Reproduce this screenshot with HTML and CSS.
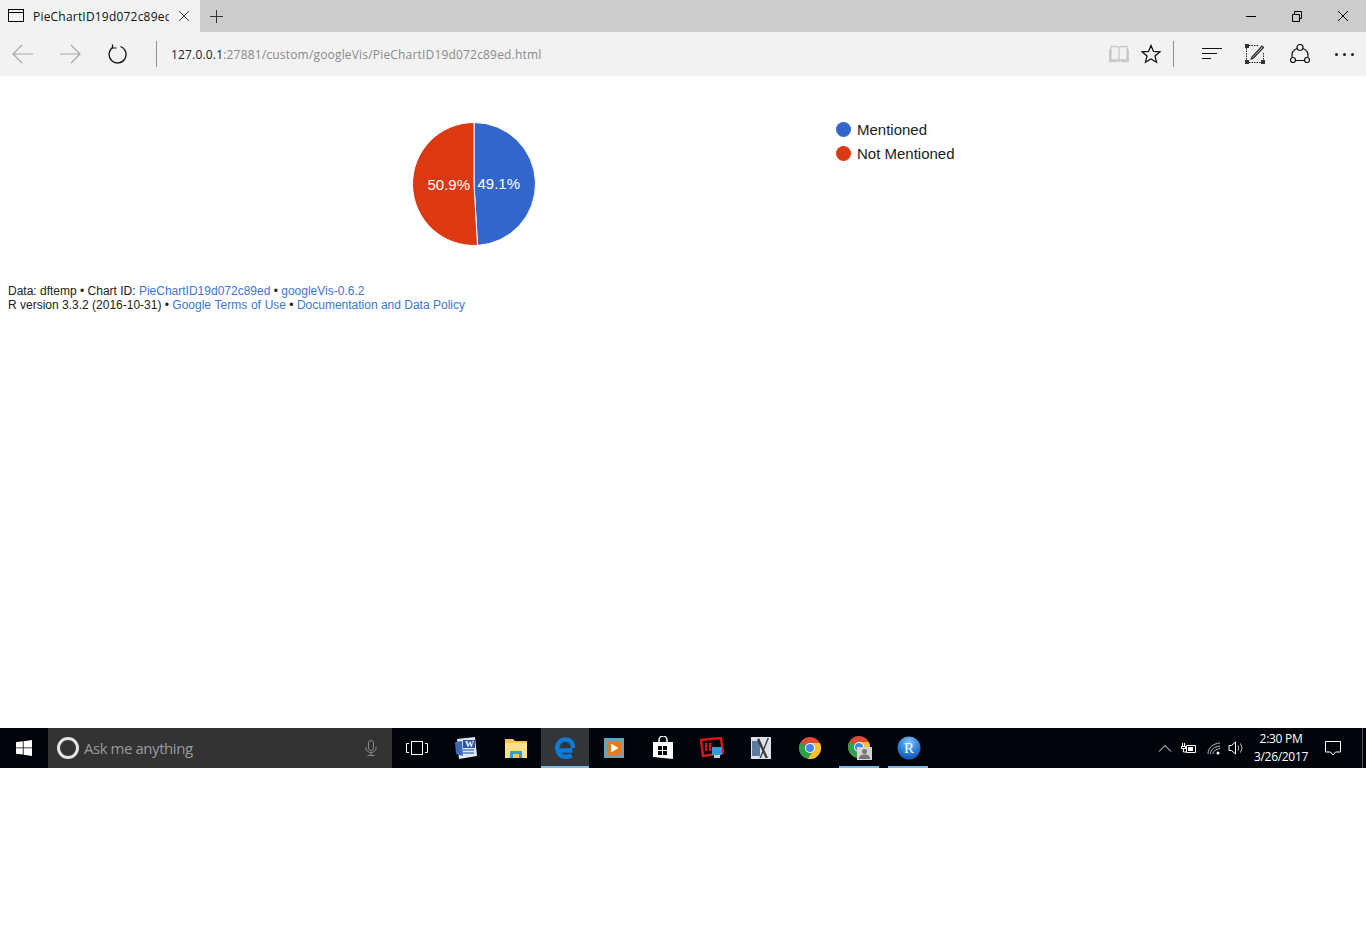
FILE: index.html
```html
<!DOCTYPE html>
<html lang="en">

<head>
    <meta charset="UTF-8">
    <meta name="viewport" content="width=device-width, initial-scale=1.0">
    <title>PieChartID19d072c89ed</title>
    <link rel="stylesheet" href="styles.css">
</head>

<body>
    <!-- Tab strip -->
    <div class="tabbar">
        <div class="tab">
            <svg class="tab-icon" width="16" height="14" viewBox="0 0 16 14" fill="none" stroke="#000">
                <rect x="0.5" y="0.5" width="15" height="12"/>
                <path d="M1 3.500h14"/>
            </svg>
            <span class="tab-title">PieChartID19d072c89ed</span>
            <svg class="tab-close" width="12" height="12" viewBox="0 0 12 12" stroke="#333" fill="none">
                <path d="M1 1l10 10M11 1L1 11"/>
            </svg>
        </div>
        <svg class="new-tab" width="15" height="15" viewBox="0 0 15 15" stroke="#333" fill="none">
            <path d="M7.500 1v13M1 7.500h13"/>
        </svg>
        <div class="window-btns">
            <svg width="46" height="32" viewBox="0 0 46 32" stroke="#000" fill="none"><path d="M18 16.500h10"/></svg>
            <svg width="46" height="32" viewBox="0 0 46 32" stroke="#000" fill="none"><path d="M18.500 14.500h7v7h-7zM20.500 14v-2.500h7v7H26"/></svg>
            <svg width="46" height="32" viewBox="0 0 46 32" stroke="#000" fill="none"><path d="M18 11l10 10M28 11L18 21"/></svg>
        </div>
    </div>

    <!-- Address bar -->
    <div class="toolbar">
        <svg class="nav-back" width="22" height="20" viewBox="0 0 22 20" stroke="#a9a9a9" fill="none" stroke-width="1.2">
            <path d="M1 10h20M10 1l-9 9 9 9"/>
        </svg>
        <svg class="nav-forward" width="22" height="20" viewBox="0 0 22 20" stroke="#a9a9a9" fill="none" stroke-width="1.2">
            <path d="M1 10h20M12 1l9 9-9 9"/>
        </svg>
        <svg class="nav-refresh" width="20" height="20" viewBox="0 0 20 20" stroke="#111" fill="none" stroke-width="1.3">
            <path d="M6 3.300A8.500 8.500 0 1 0 13.500 2.500"/>
            <path d="M5.500 0.500V4H9.500" stroke-width="1.200"/>
        </svg>
        <div class="divider"></div>
        <div class="url"><span class="url-host">127.0.0.1</span>:27881/custom/googleVis/PieChartID19d072c89ed.html</div>
        <svg class="tool-reading" width="20" height="18" viewBox="0 0 20 18" stroke="#c9c9c9" fill="none" stroke-width="1.300">
            <path d="M2 1.500h6.500L10 3l1.500-1.500H18V15h-6.500L10 16.500 8.500 15H2zM10 3v13M0.700 4v12.500H8M19.300 4v12.500H12"/>
        </svg>
        <svg class="tool-star" width="20" height="20" viewBox="0 0 20 20" stroke="#111" fill="none" stroke-width="1.300">
            <path d="M10 1.500l2.500 5.900 6.300.5-4.800 4.100 1.500 6.200-5.500-3.300-5.500 3.300 1.500-6.200L1.200 7.900l6.300-.5z"/>
        </svg>
        <div class="divider divider-right"></div>
        <svg class="tool-hub" width="20" height="14" viewBox="0 0 20 14" stroke="#111" fill="none">
            <path d="M0 1.500h20M0 6.500h15M0 11.500h9"/>
        </svg>
        <svg class="tool-note" width="20" height="20" viewBox="0 0 20 20" fill="none" stroke="#222">
            <path d="M4 1.500h9M1.500 4v12M4 18.500h12M18.500 9v7" stroke-dasharray="1.500 1"/>
            <path d="M0 0h4v4H0zM0 16h4v4H0zM16 16h4v4h-4z" fill="#333" stroke="none"/>
            <path d="M7 13l-.8 2 2-.8L18.500 3.500 17 2z" stroke-width="1.200"/>
        </svg>
        <svg class="tool-share" width="20" height="20" viewBox="0 0 20 20" fill="none" stroke="#111" stroke-width="1.200">
            <path d="M7 4.500A8 8 0 0 0 2 13M13 4.500A8 8 0 0 1 18 13M5 16.500h10"/>
            <circle cx="10" cy="3.500" r="3"/>
            <circle cx="3" cy="16" r="2.500"/>
            <circle cx="17" cy="16" r="2.500"/>
        </svg>
        <div class="tool-more"><span></span><span></span><span></span></div>
    </div>

    <!-- Page content -->
    <main class="page">
        <svg class="chart" width="1100" height="200" viewBox="0 0 1100 200">
            <path d="M466 100L466 38.500A61.500 61.500 0 0 1 469.500 161.400Z" fill="#3366cc" stroke="#fff"/>
            <path d="M466 100L469.500 161.400A61.500 61.500 0 1 1 466 38.500Z" fill="#dc3912" stroke="#fff"/>
            <text class="pie-label" x="419.500" y="105.500">50.9%</text>
            <text class="pie-label" x="469.500" y="105">49.1%</text>
            <circle cx="835.500" cy="45.500" r="7.500" fill="#3366cc"/>
            <text class="legend-label" x="849" y="51">Mentioned</text>
            <circle cx="835.500" cy="69.500" r="7.500" fill="#dc3912"/>
            <text class="legend-label" x="849" y="75">Not Mentioned</text>
        </svg>
        <div class="footer">
            Data: dftemp &bull; Chart ID: <a href="#">PieChartID19d072c89ed</a> &bull; <a href="#">googleVis-0.6.2</a><br>
            R version 3.3.2 (2016-10-31) &bull; <a class="terms-link" href="#">Google Terms of Use</a> &bull; <a href="#">Documentation and Data Policy</a>
        </div>
    </main>

    <!-- Windows taskbar -->
    <div class="taskbar">
        <div class="start">
            <svg width="16" height="16" viewBox="0 0 16 16" fill="#fff">
                <path d="M0 2.300l6.800-1v6.200H0zM7.600 1.200L16 0v7.500H7.600zM0 8.300h6.800v6.300L0 13.700zM7.600 8.300H16V16l-8.400-1.200z"/>
            </svg>
        </div>
        <div class="search">
            <span class="cortana"></span>
            <span class="search-text">Ask me anything</span>
            <svg class="mic" width="12" height="16" viewBox="0 0 12 16" fill="none" stroke="#8a8a8a">
                <rect x="3.500" y="0.500" width="5" height="10" rx="2.500"/>
                <path d="M1 7v1.500a5 4 0 0 0 10 0V7M6 12.500v3M2.500 15.500h7"/>
            </svg>
        </div>
        <div class="task-item task-view">
            <svg width="22" height="16" viewBox="0 0 22 16" fill="none" stroke="#fff">
                <rect x="5.500" y="1.500" width="11" height="13"/>
                <path d="M3 3.500H0.500v9H3M19 3.500h2.500v9H19"/>
            </svg>
        </div>
        <div class="task-item">
            <svg width="24" height="24" viewBox="0 0 24 24">
                <path d="M3 3l18-2 2 19-18 3z" fill="#dfe7f5"/>
                <path d="M1 6l7-1 1 15-7-2z" fill="#3f68b5"/>
                <rect x="9" y="4" width="12" height="8" fill="#2b579a"/>
                <text class="word-letter" x="11" y="11">W</text>
                <path d="M9 14h11M9 17h11" stroke="#5a7fc0" stroke-width="1.500"/>
            </svg>
        </div>
        <div class="task-item task-folder">
            <svg width="22" height="20" viewBox="0 0 22 20">
                <path d="M0 1h8l2 2h12v17H0z" fill="#f3c64f"/>
                <rect x="0" y="5" width="22" height="15" fill="#fde08c"/>
                <path d="M5 20v-7h12v7h-3v-3H8v3z" fill="#2f9bd8"/>
                <rect x="8" y="16" width="6" height="4" fill="#f3c64f"/>
            </svg>
        </div>
        <div class="task-item task-active running">
            <svg width="22" height="22" viewBox="0 0 22 22" fill="none" stroke="#0f7bd6" stroke-width="4.500">
                <path d="M18.500 13.500H3.500M3 12.500C3 6 7 2.500 11.500 2.500c4.500 0 7.500 3 7.500 8.500M3.500 12c0 4.500 3.500 7.800 8 7.800 2.500 0 4.500-.6 6-1.500"/>
            </svg>
        </div>
        <div class="task-item">
            <svg width="20" height="20" viewBox="0 0 20 20">
                <rect width="20" height="20" fill="#6ba3bd"/>
                <rect x="3" y="3" width="14" height="14" fill="#e57a1f"/>
                <path d="M7 5.500L14.500 10 7 14.500z" fill="#fff"/>
            </svg>
        </div>
        <div class="task-item">
            <svg width="22" height="24" viewBox="0 0 22 24" fill="#fff">
                <path d="M7 6V4a4 4 0 0 1 8 0v2" fill="none" stroke="#fff" stroke-width="1.500"/>
                <path d="M1 6h20v17L1 21z"/>
                <path d="M6 10h4v4H6zM11 10h4v4h-4zM6 15h4v4H6zM11 15h4v4h-4z" fill="#000"/>
            </svg>
        </div>
        <div class="task-item">
            <svg width="24" height="22" viewBox="0 0 24 22">
                <path d="M1 3l20-2 2 15-20 3z" fill="none" stroke="#d8141a" stroke-width="2.500"/>
                <path d="M5 6h2v8H5zM9 6h2v8H9z" fill="#d8141a"/>
                <rect x="12" y="10" width="10" height="8" fill="#2f9bd8"/>
                <rect x="14" y="18" width="6" height="3" fill="#c9c9c9"/>
            </svg>
        </div>
        <div class="task-item">
            <svg width="20" height="22" viewBox="0 0 20 22">
                <rect width="20" height="22" fill="#dfe2e6"/>
                <path d="M1 4h8v15H1z" fill="#5b7a9e"/>
                <path d="M8 1l9 20h-2.500L6 3zM18 1l-8 20H8.500l8-20z" fill="#3a3f4a"/>
            </svg>
        </div>
        <div class="task-item task-chrome">
            <svg width="22" height="22" viewBox="0 0 22 22"><use href="#chrome-logo"/></svg>
        </div>
        <div class="task-item running running-short">
            <svg width="24" height="24" viewBox="0 0 24 24">
                <use href="#chrome-logo"/>
                <rect x="9" y="11" width="15" height="13" fill="#d4d4d4"/>
                <circle cx="16.500" cy="15.500" r="2.500" fill="#777"/>
                <path d="M11 23c0-3.500 2.500-4.500 5.500-4.500S22 19.500 22 23z" fill="#777"/>
            </svg>
        </div>
        <div class="task-item running running-short">
            <svg width="24" height="24" viewBox="0 0 24 24">
                <defs>
                    <radialGradient id="r-ball" cx="50%" cy="25%" r="75%">
                        <stop offset="0" stop-color="#8cc4f5"/>
                        <stop offset="0.6" stop-color="#2a80dc"/>
                        <stop offset="1" stop-color="#0f55ad"/>
                    </radialGradient>
                </defs>
                <circle cx="12" cy="12" r="11.500" fill="url(#r-ball)"/>
                <text class="r-letter" x="12" y="17">R</text>
            </svg>
        </div>

        <div class="tray">
            <svg class="tray-chevron" width="14" height="8" viewBox="0 0 14 8" fill="none" stroke="#fff">
                <path d="M1 7.500l6-6 6 6"/>
            </svg>
            <svg class="tray-battery" width="16" height="11" viewBox="0 0 16 11" fill="none" stroke="#fff">
                <path d="M5.500 2.500h9v7h-9z"/>
                <path d="M7 4h5v4H7z" fill="#fff" stroke="none"/>
                <path d="M1.500 0v3M3.500 0v3M0.500 3.500h4v2h-4zM2.500 5.500V9h3"/>
            </svg>
            <svg class="tray-wifi" width="14" height="13" viewBox="0 0 14 13" fill="none" stroke="#bdbdbd">
                <path d="M1 12C1 6 6 1.500 13 1M3.500 12C3.500 8 7 4.500 13 4M6 12c0-2.500 2.500-5 7-5.500"/>
                <circle cx="11" cy="11" r="1.500" fill="#fff" stroke="none"/>
            </svg>
            <svg class="tray-sound" width="16" height="14" viewBox="0 0 16 14" fill="none" stroke="#fff">
                <path d="M1 4.500h2.500L7.500 1v12l-4-3.500H1z"/>
                <path d="M10 4.500q1.500 2.500 0 5M12.500 2.500q3 4.500 0 9" stroke="#bdbdbd"/>
            </svg>
            <div class="clock">
                <div>2:30 PM</div>
                <div>3/26/2017</div>
            </div>
            <svg class="tray-action" width="16" height="15" viewBox="0 0 16 15" fill="none" stroke="#fff">
                <path d="M0.500 0.500h15v10.500h-5L8 14l-2.500-3h-5z"/>
            </svg>
            <div class="show-desktop"></div>
        </div>
    </div>

    <!-- shared chrome logo -->
    <svg class="defs" width="0" height="0">
        <defs>
            <g id="chrome-logo">
                <circle cx="11" cy="11" r="11" fill="#dd4b39"/>
                <path d="M11 11L1.500 5.500A11 11 0 0 0 9 21.800L14 14z" fill="#2ba24c"/>
                <path d="M11 6h9.800A11 11 0 0 1 9 21.800L14 14z" fill="#fbc02d"/>
                <circle cx="11" cy="11" r="5" fill="#fff"/>
                <circle cx="11" cy="11" r="4" fill="#4285f4"/>
            </g>
        </defs>
    </svg>
</body>

</html>
```

FILE: styles.css
```css
html,
body {
    margin: 0;
    padding: 0;
    background-color: #fff;
}

body {
    font-family: "Open Sans", "Noto Sans", sans-serif;
    min-height: 930px;
}

svg {
    display: block;
    flex-shrink: 0;
}

.tabbar {
    height: 32px;
    background-color: #cccccc;
    display: flex;
    align-items: center;
}

.tab {
    width: 200px;
    height: 32px;
    background-color: #f2f2f2;
    display: flex;
    align-items: center;
    box-sizing: border-box;
    padding-left: 8px;
}

.tab-title {
    width: 136px;
    flex-shrink: 0;
    margin-left: 9px;
    font-size: 12px;
    letter-spacing: 0.2px;
    color: #111;
    white-space: nowrap;
    overflow: hidden;
}

.tab-close {
    margin-left: 9px;
}

.new-tab {
    margin-left: 9px;
}

.window-btns {
    margin-left: auto;
    display: flex;
}

.toolbar {
    height: 44px;
    background-color: #f2f2f2;
    display: flex;
    align-items: center;
}

.nav-back {
    margin-left: 12px;
}

.nav-forward {
    margin-left: 25px;
}

.nav-refresh {
    margin-left: 26px;
}

.divider {
    width: 1px;
    height: 26px;
    background-color: #8f8f8f;
    margin-left: 29px;
}

.url {
    margin-left: 14px;
    width: 938px;
    font-size: 12px;
    letter-spacing: 0.18px;
    color: #8a8a8a;
    white-space: nowrap;
}

.url-host {
    color: #222;
}

.tool-star {
    margin-left: 12px;
}

.divider-right {
    margin-left: 12px;
}

.tool-hub {
    margin-left: 28px;
}

.tool-note {
    margin-left: 23px;
}

.tool-share {
    margin-left: 25px;
}

.tool-more {
    margin-left: 25px;
    display: flex;
    gap: 5px;
}

.tool-more span {
    width: 3px;
    height: 3px;
    border-radius: 50%;
    background-color: #222;
}

.page {
    height: 652px;
    box-sizing: border-box;
    padding: 8px;
}

.pie-label {
    font-family: "Liberation Sans", Arial, sans-serif;
    font-size: 15px;
    fill: #fff;
}

.legend-label {
    font-family: "Liberation Sans", Arial, sans-serif;
    font-size: 15px;
    fill: #222;
}

.footer {
    font-family: "Liberation Sans", Arial, sans-serif;
    font-size: 12px;
    line-height: 14px;
    color: #222;
}

.footer a {
    color: #3a77d2;
    text-decoration: none;
}

.footer .terms-link {
    word-spacing: 0.4px;
}

.taskbar {
    height: 40px;
    background-color: #01040a;
    display: flex;
    align-items: stretch;
}

.start {
    width: 48px;
    display: flex;
    align-items: center;
    justify-content: center;
}

.search {
    width: 344px;
    background-color: #333333;
    display: flex;
    align-items: center;
    box-sizing: border-box;
    padding-left: 9px;
}

.cortana {
    width: 22px;
    height: 22px;
    box-sizing: border-box;
    border: 3px solid #e4e4e4;
    border-radius: 50%;
}

.search-text {
    margin-left: 5px;
    font-size: 15px;
    letter-spacing: -0.45px;
    color: #9a9a9a;
    width: 281px;
}

.task-item {
    width: 49px;
    position: relative;
    display: flex;
    align-items: center;
    justify-content: center;
}

.task-folder {
    width: 51px;
}

.task-chrome {
    width: 50px;
}

.task-active {
    width: 48px;
    background-color: #333539;
}

.running::after {
    content: "";
    position: absolute;
    left: 0;
    right: 0;
    bottom: 0;
    height: 2px;
    background-color: #76b9ed;
}

.running-short::after {
    left: 4px;
    right: 5px;
}

.word-letter {
    font-family: "Liberation Serif", serif;
    font-size: 9px;
    font-weight: bold;
    fill: #fff;
}

.r-letter {
    font-family: "Liberation Serif", serif;
    font-size: 15px;
    fill: #fff;
    text-anchor: middle;
}

.tray {
    margin-left: auto;
    display: flex;
    align-items: center;
}

.tray-battery {
    margin-left: 9px;
}

.tray-wifi {
    margin-left: 10px;
}

.tray-sound {
    margin-left: 7px;
}

.clock {
    width: 60px;
    margin-left: 7px;
    font-size: 12px;
    line-height: 18px;
    color: #fff;
    text-align: center;
    letter-spacing: -0.3px;
}

.tray-action {
    margin-left: 14px;
}

.show-desktop {
    width: 1px;
    height: 40px;
    margin-left: 21px;
    margin-right: 3px;
    background-color: #555;
}

.defs {
    position: absolute;
}
```
